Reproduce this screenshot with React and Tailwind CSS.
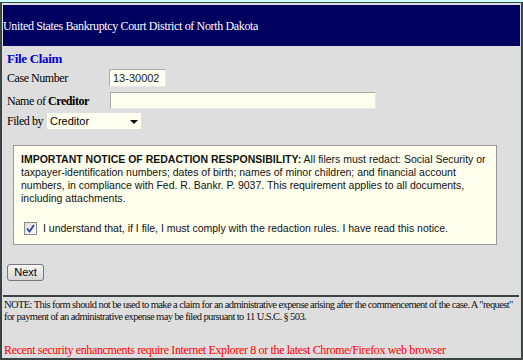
export default function App() {
  const serif = { fontFamily: '"Liberation Serif", "Times New Roman", serif' };
  const sans = { fontFamily: '"Liberation Sans", Arial, sans-serif' };

  return (
    <div className="h-[360px] w-[523px] overflow-hidden bg-[#ccffff] pt-[2px]" style={serif}>
      <div className="flex h-[358px] flex-col border-b-2 border-l-2 border-r-2 border-t border-[#3a4444] bg-[#dedede] pr-[1px] pl-[1px] pt-[2px]">
        <div className="flex h-[41px] items-center bg-[#000060] text-[12px] tracking-[-0.35px] text-white">
          United States Bankruptcy Court District of North Dakota
        </div>

        <div className="pl-[4px] pt-[4px]">
          <h1 className="text-[13px] font-bold leading-[17px] tracking-[-0.3px] text-[#0000cc]">File Claim</h1>

          <div className="mt-[2px] flex items-center text-[12px] leading-[14px] tracking-[-0.45px] text-black">
            <span className="w-[102px]">Case Number</span>
            <div
              className="flex h-[18px] w-[57px] items-center border border-t-[#aaaaaa] border-l-[#aaaaaa] border-b-[#e8e8e8] border-r-[#e8e8e8] bg-[#fffff0] pl-[3px] text-[11px] tracking-normal text-[#222]"
              style={sans}
            >
              13-30002
            </div>
          </div>

          <div className="mt-[5px] flex items-center text-[12px] leading-[14px] tracking-[-0.45px] text-black">
            <span className="w-[103px]">
              Name of <b>Creditor</b>
            </span>
            <div className="h-[17px] w-[266px] border border-t-[#aaaaaa] border-l-[#aaaaaa] border-b-[#e8e8e8] border-r-[#e8e8e8] bg-[#fffff0]" />
          </div>

          <div className="mt-[4px] flex items-center text-[12px] leading-[14px] tracking-[-0.45px] text-black">
            <span className="w-[40px]">Filed by</span>
            <div
              className="relative flex h-[16px] w-[94px] items-center bg-[#fffff0] pl-[3px] text-[11px] tracking-normal text-black"
              style={sans}
            >
              Creditor
              <svg className="absolute right-[3px] top-[7px]" width="8" height="5" viewBox="0 0 8 5">
                <path d="M0 0 H8 L4 4 Z" fill="#111" />
              </svg>
            </div>
          </div>

          <div
            className="mt-[16px] ml-[6px] w-[484px] border border-[#999999] bg-[#ffffee] px-[7px] pb-[9px] pt-[7px] text-[10.5px] leading-[13px] text-[#111]"
            style={sans}
          >
            <p>
              <b>IMPORTANT NOTICE OF REDACTION RESPONSIBILITY:</b> All filers must redact: Social Security or
              taxpayer-identification numbers; dates of birth; names of minor children; and financial account
              numbers, in compliance with Fed. R. Bankr. P. 9037. This requirement applies to all documents,
              including attachments.
            </p>
            <div className="mt-[17px] flex items-center gap-[6px] pl-[3px]">
              <span className="flex h-[13px] w-[13px] items-center justify-center border border-[#8a8a8a] bg-gradient-to-br from-[#dcdcdc] to-[#ffffff]">
                <svg width="9" height="9" viewBox="0 0 9 9">
                  <path d="M1 4.5 L3.5 7.5 L8 1" fill="none" stroke="#2a3fb0" strokeWidth="1.8" />
                </svg>
              </span>
              <span>I understand that, if I file, I must comply with the redaction rules. I have read this notice.</span>
            </div>
          </div>

          <button
            className="mt-[19px] flex h-[17px] w-[37px] items-center justify-center rounded-[3px] border border-[#777] bg-gradient-to-b from-[#f6f6f6] to-[#d6d6d6] text-[11px] text-black"
            style={sans}
          >
            Next
          </button>
        </div>

        <div className="mt-[14px] mr-[1px] h-[2px] bg-[#3a4444]" />

        <p className="pl-[1px] pt-[2px] text-[10.5px] leading-[12px] tracking-[-0.6px] text-[#111]">
          NOTE: This form should not be used to make a claim for an administrative expense arising after the commencement of the case. A "request" for payment of an administrative expense may be filed pursuant to 11 U.S.C. § 503.
        </p>

        <p className="mt-[20px] pl-[1px] text-[12px] leading-[15px] tracking-[-0.35px] text-[#ff0000]">
          Recent security enhancments require Internet Explorer 8 or the latest Chrome/Firefox web browser
        </p>
      </div>
    </div>
  );
}
